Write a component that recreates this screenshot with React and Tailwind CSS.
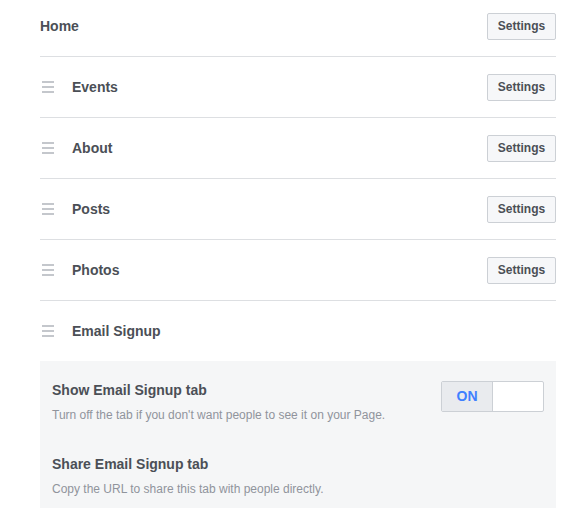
const tabs = ["Events", "About", "Posts", "Photos"];

function Handle() {
  return (
    <div className="flex w-[12px] flex-col gap-[3px]">
      <span className="h-[2px] w-full bg-[#c4c7cc]" />
      <span className="h-[2px] w-full bg-[#c4c7cc]" />
      <span className="h-[2px] w-full bg-[#c4c7cc]" />
    </div>
  );
}

function SettingsButton() {
  return (
    <button className="h-[27px] w-[69px] rounded-[2px] border border-[#ccd0d5] bg-[#f6f7f9] text-[12px] font-bold text-[#4b4f56]">
      Settings
    </button>
  );
}

export default function App() {
  return (
    <div
      className="w-[564px] bg-white pl-[40px] pr-[8px] text-[#4b4f56]"
      style={{ fontFamily: '"Liberation Sans", Arial, sans-serif' }}
    >
      <div className="flex h-[57px] items-center justify-between border-b border-[#dddfe2] pb-[4px]">
        <span className="text-[14px] font-bold">Home</span>
        <SettingsButton />
      </div>
      {tabs.map((t) => (
        <div
          key={t}
          className="flex h-[61px] items-center justify-between border-b border-[#dddfe2]"
        >
          <div className="flex items-center">
            <div className="ml-[2px] mr-[18px]">
              <Handle />
            </div>
            <span className="text-[14px] font-bold">{t}</span>
          </div>
          <SettingsButton />
        </div>
      ))}
      <div className="flex h-[60px] items-center">
        <div className="ml-[2px] mr-[18px]">
          <Handle />
        </div>
        <span className="text-[14px] font-bold">Email Signup</span>
      </div>
      <div className="bg-[#f5f6f7] px-[12px] pb-[11px] pt-[20px]">
        <div className="flex items-start justify-between">
          <div>
            <div className="text-[14px] font-bold leading-[18px]">Show Email Signup tab</div>
            <div className="mt-[8px] text-[12px] leading-[16px] text-[#90949c]">
              Turn off the tab if you don't want people to see it on your Page.
            </div>
          </div>
          <div className="flex h-[31px] w-[103px] overflow-hidden rounded-[2px] border border-[#ccd0d5] bg-white">
            <div className="flex w-[51px] items-center justify-center border-r border-[#ccd0d5] bg-[#e9ebee] text-[14px] font-bold text-[#4080ff]">
              ON
            </div>
            <div className="flex-1" />
          </div>
        </div>
        <div className="mt-[32px] text-[14px] font-bold leading-[18px]">Share Email Signup tab</div>
        <div className="mt-[8px] text-[12px] leading-[16px] text-[#90949c]">
          Copy the URL to share this tab with people directly.
        </div>
      </div>
    </div>
  );
}
